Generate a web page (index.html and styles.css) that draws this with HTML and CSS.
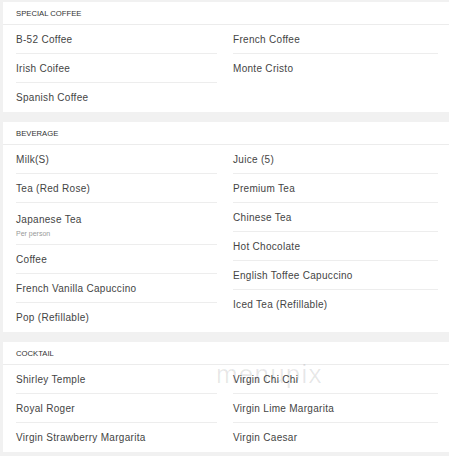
FILE: index.html
```html
<!DOCTYPE html>
<html lang="en">
<head>
    <meta charset="UTF-8">
    <meta name="viewport" content="width=device-width, initial-scale=1.0">
    <title>Menu</title>
    <link rel="stylesheet" href="styles.css">
</head>
<body>

    <div class="menu">

        <div class="section">
            <div class="section-title">SPECIAL COFFEE</div>
            <div class="items">
                <div class="col">
                    <div class="item">B-52 Coffee</div>
                    <div class="item">Irish Coifee</div>
                    <div class="item">Spanish Coffee</div>
                </div>
                <div class="col">
                    <div class="item">French Coffee</div>
                    <div class="item">Monte Cristo</div>
                </div>
            </div>
        </div>

        <div class="section">
            <div class="section-title">BEVERAGE</div>
            <div class="items">
                <div class="col">
                    <div class="item">Milk(S)</div>
                    <div class="item">Tea (Red Rose)</div>
                    <div class="item tall">Japanese Tea<span class="note">Per person</span></div>
                    <div class="item">Coffee</div>
                    <div class="item">French Vanilla Capuccino</div>
                    <div class="item">Pop (Refillable)</div>
                </div>
                <div class="col">
                    <div class="item">Juice (5)</div>
                    <div class="item">Premium Tea</div>
                    <div class="item">Chinese Tea</div>
                    <div class="item">Hot Chocolate</div>
                    <div class="item">English Toffee Capuccino</div>
                    <div class="item">Iced Tea (Refillable)</div>
                </div>
            </div>
        </div>

        <div class="section">
            <div class="section-title">COCKTAIL</div>
            <div class="items">
                <div class="col">
                    <div class="item">Shirley Temple</div>
                    <div class="item">Royal Roger</div>
                    <div class="item">Virgin Strawberry Margarita</div>
                </div>
                <div class="col">
                    <div class="item">Virgin Chi Chi</div>
                    <div class="item">Virgin Lime Margarita</div>
                    <div class="item">Virgin Caesar</div>
                </div>
            </div>
            <div class="watermark">menupix</div>
        </div>

    </div>

</body>
</html>
```

FILE: styles.css
```css
body {
    font-family: "Liberation Sans", Arial, sans-serif;
    background-color: #f1f1f1;
    margin: 0;
    padding: 0;
    overflow: hidden;
}

.menu {
    padding-top: 2px;
    margin-left: 3px;
    width: 452px;
    display: flex;
    flex-direction: column;
    gap: 10px;
}

.section {
    background-color: #fff;
    position: relative;
}

.section-title {
    height: 23px;
    line-height: 24px;
    padding-left: 13px;
    font-size: 7.7px;
    color: #333;
    border-bottom: 1px solid #ececec;
    box-sizing: border-box;
}

.items {
    display: grid;
    grid-template-columns: 201px 205px;
    column-gap: 16px;
    padding-left: 13px;
}

.item {
    height: 29px;
    display: flex;
    flex-direction: column;
    justify-content: center;
    font-size: 10px;
    letter-spacing: 0.3px;
    color: #444;
    border-bottom: 1px solid #ededed;
    box-sizing: border-box;
}

.item:last-child {
    border-bottom: none;
}

.item.tall {
    height: 42px;
    padding-top: 3px;
}

.note {
    font-size: 7px;
    letter-spacing: 0;
    color: #999;
    margin-top: 5px;
}

.watermark {
    position: absolute;
    left: 213px;
    top: 17px;
    font-size: 26px;
    letter-spacing: 1.2px;
    color: rgba(0, 0, 0, 0.09);
    pointer-events: none;
}
```
